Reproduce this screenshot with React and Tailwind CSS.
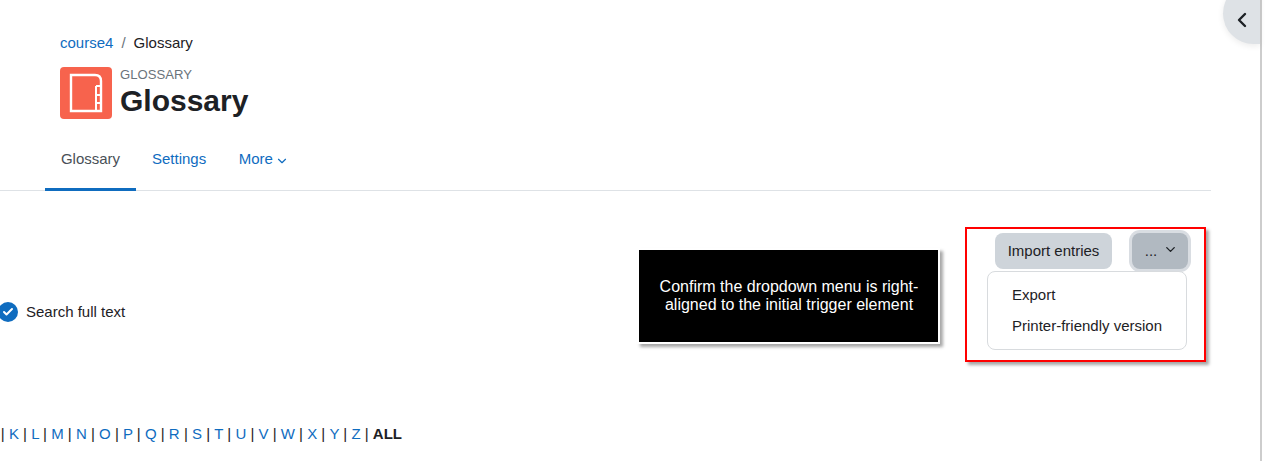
import { ChevronDown, ChevronLeft, Check } from "lucide-react";

const letters = ["K", "L", "M", "N", "O", "P", "Q", "R", "S", "T", "U", "V", "W", "X", "Y", "Z"];

function BookIcon() {
  return (
    <svg width="34" height="40" viewBox="0 0 34 40" fill="none" stroke="#fff" strokeWidth="2.4">
      <path d="M2 2H26Q32 2 32 8V38H2Z" />
      <path d="M27 13H32M27 22H32M27 30H32M27 13V38" strokeWidth="2" />
    </svg>
  );
}

export default function App() {
  return (
    <div className="relative h-[461px] w-[1265px] overflow-hidden bg-white font-['Liberation_Sans',Arial,sans-serif] text-[15px] text-[#1d2125]">
      <div className="h-full w-[1211px]">
        {/* Header */}
        <div className="pl-[60px] pt-[33px]">
          <div className="flex h-[19px] items-center leading-[19px]">
            <a className="text-[#0f6cbf]">course4</a>
            <span className="mx-2 text-[#6a737b]">/</span>
            <span>Glossary</span>
          </div>
          <div className="mt-[15px] flex">
            <div className="flex h-[52px] w-[52px] items-center justify-center rounded-[4px] bg-[#f7634d]">
              <BookIcon />
            </div>
            <div className="ml-2">
              <div className="mt-[1px] text-[13.125px] leading-[14px] text-[#6a737b]">GLOSSARY</div>
              <h1 className="mt-[1px] text-[30px] leading-[36px] font-bold">Glossary</h1>
            </div>
          </div>
        </div>

        {/* Tabs */}
        <div className="mt-[11px] flex h-[61px] border-b border-[#dee2e6] pl-[45px]">
          <a className="flex h-[61px] w-[91px] items-center justify-center border-b-[3px] border-[#0f6cbf] pt-[1px] text-[#495057]">
            Glossary
          </a>
          <a className="ml-4 flex items-center pb-[1px] text-[#0f6cbf]">Settings</a>
          <a className="ml-[32.5px] flex items-center gap-[2px] pb-[1px] text-[#0f6cbf]">
            More
            <ChevronDown size={14} strokeWidth={2} className="mt-[2px]" />
          </a>
        </div>

        {/* Action buttons */}
        <div className="mt-[42px] flex justify-end gap-5 pr-[23px]">
          <button className="h-9 w-[117px] rounded-lg bg-[#ced4da] text-[#1d2125]">Import entries</button>
          <button className="flex h-9 w-[56px] items-center justify-center gap-[6px] rounded-lg bg-[#b1b9c1] pl-[3px] shadow-[0_0_0_3px_#d9dde2]">
            ...
            <ChevronDown size={15} strokeWidth={2.2} className="mb-[3px]" />
          </button>
        </div>

        {/* Search option */}
        <div className="mt-[33px] ml-[-2px] flex h-5 items-center">
          <span className="flex h-5 w-5 items-center justify-center rounded-full bg-[#0f6cbf]">
            <Check size={12} strokeWidth={4} className="text-white" />
          </span>
          <span className="ml-[8px]">Search full text</span>
        </div>

        {/* Alphabet */}
        <div className="mt-[103px] pl-[0.8px] leading-[18px]">
          {letters.map((l) => (
            <span key={l}>
              |&nbsp;<a className="text-[#0f6cbf]">{l}</a>{" "}
            </span>
          ))}
          | <strong>ALL</strong>
        </div>
      </div>

      {/* Page scrollbar edge */}
      <div className="absolute top-0 left-[1260px] h-full w-[2px] bg-[#cdcdcd]" />

      {/* Drawer toggle */}
      <div className="absolute top-[-17px] left-[1223px] flex h-[61px] w-[37px] items-center rounded-l-full bg-[#dee2e6] pt-[13px] pl-[7px] shadow-[0_2px_6px_rgba(0,0,0,0.08)]">
        <ChevronLeft size={24} strokeWidth={2.4} />
      </div>

      {/* Annotation callout */}
      <div className="absolute top-[248px] left-[637px] flex h-[96px] w-[303px] items-center justify-center border-2 border-white bg-black pl-[1px] text-center text-[16px] leading-[18px] text-white shadow-[3px_3px_3px_rgba(0,0,0,0.35)]">
        <div className="w-[270px]">Confirm the dropdown menu is right-aligned to the initial trigger element</div>
      </div>

      {/* Highlight box */}
      <div className="absolute top-[227px] left-[965px] h-[135px] w-[241px] border-2 border-[#ff0000] shadow-[3px_3px_3px_rgba(0,0,0,0.35)]" />

      {/* Dropdown menu */}
      <div className="absolute top-[271px] left-[987px] h-[79px] w-[200px] rounded-lg border border-[#d8dbde] bg-white pt-[7px] pl-6 text-[#1d2125]">
        <div className="h-[31px] leading-[31px]">Export</div>
        <div className="h-[31px] leading-[31px]">Printer-friendly version</div>
      </div>
    </div>
  );
}
